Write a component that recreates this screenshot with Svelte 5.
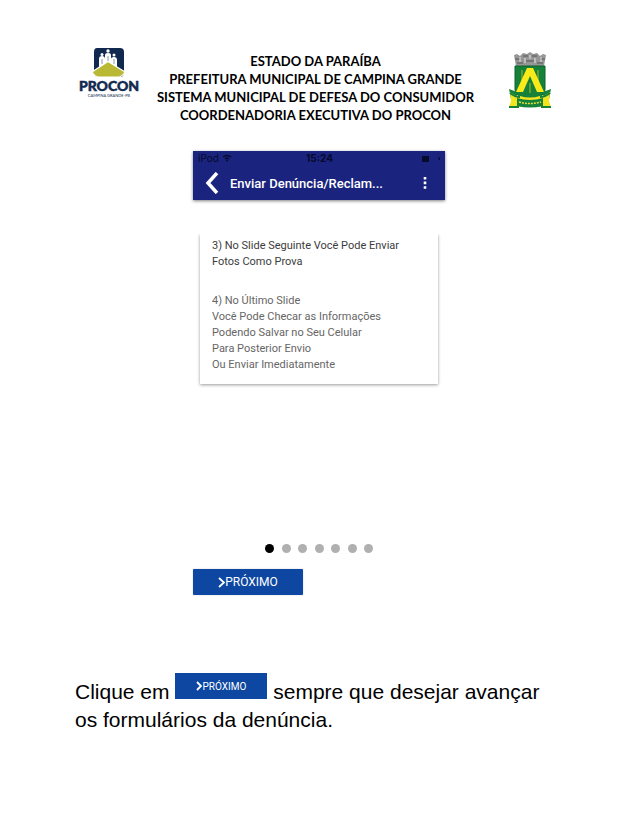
<script>
  const heading = [
    'ESTADO DA PARAÍBA',
    'PREFEITURA MUNICIPAL DE CAMPINA GRANDE',
    'SISTEMA MUNICIPAL DE DEFESA DO CONSUMIDOR',
    'COORDENADORIA EXECUTIVA DO PROCON'
  ];
  const slideCount = 7;
  let active = $state(0);
  const next = () => (active = (active + 1) % slideCount);
</script>

<main class="page">
  <header class="letterhead">
    <svg class="procon" viewBox="0 0 60 52" role="img" aria-label="Procon Campina Grande">
      <path d="M18 1h23q4 0 4 4v20q0 5-4 5H19q-4 0-4-5V5q0-4 3-4z" fill="#12294f" />
      <path d="M20 20v-8q0-3 3-3t3 3V8q0-2 3-2t3 2v4q0-2 3-2t3 3v7l4 4H18z" fill="#fff" />
      <circle cx="23" cy="7.500" r="1.500" fill="#fff" />
      <circle cx="29" cy="4" r="1.700" fill="#fff" />
      <circle cx="35" cy="8" r="1.500" fill="#fff" />
      <path d="M23 12v5M29 9v5M35 12v5" stroke="#8d99ac" stroke-width="1" />
      <path d="M29 14.500L46 25q-3 5-7 5H20q-4 0-7-5z" fill="#b9b936" stroke="#fff" stroke-width="1.200" />
      <text x="30" y="44" text-anchor="middle" class="brand">PROCON</text>
      <text x="30" y="50" text-anchor="middle" class="city">CAMPINA GRANDE-PB</text>
    </svg>
    <h1>
      {#each heading as line}
        <span>{line}</span>
      {/each}
    </h1>
    <svg class="crest" viewBox="0 0 44 58" role="img" aria-label="Brasão de Campina Grande">
      <path d="M6 3l3-1 3 2 3-3 4 1 3-2 3 2 4-1 3 3 3-2 3 1-2 11H8z" fill="#969696" />
      <path d="M7 7h5M15 4h5M24 4h5M32 7h5M9 11h6M18 9h8M29 11h6" stroke="#555" stroke-width="1" />
      <path d="M12 5v5M17 6v5M22 3v4M27 6v5M33 5v5" stroke="#e4e4e4" stroke-width="1" />
      <path d="M7 14h30v24q-2 7-15 14Q9 45 7 38z" fill="#16813b" stroke="#0b6329" stroke-width="1" />
      <path d="M14 18v12M30 18v12M22 31v10" stroke="#659d2c" stroke-width="2" />
      <path d="M19 16h6l11 24h-7l-7-16-7 16H8z" fill="#fbea19" />
      <path d="M1 37l8 3v7H3zM43 37l-8 3v7h6z" fill="#16813b" />
      <path d="M2 40q5 4 10 4 10 3 20 0 5 0 10-4l-1 9 2 6H1l2-6z" fill="#f2e51d" />
      <path d="M2 41q5 4 10 4M42 41q-5 4-10 4M1 55h10M33 55h10" fill="none" stroke="#16813b" stroke-width="2" />
      <path d="M9 46q13 4 26 0v8q-13 3-26 0z" fill="#16813b" />
      <path d="M11 50q11 3 22 0" fill="none" stroke="#dfe33a" stroke-width="1.500" stroke-dasharray="2 1" />
    </svg>
  </header>

  <section class="phone" aria-label="Enviar Denúncia/Reclamação">
    <div class="appbar">
      <div class="status">
        <span class="device">iPod
          <svg width="10" height="8" viewBox="0 0 10 8" aria-hidden="true">
            <path d="M1 3q4-3 8 0M3 5q2-2 4 0" fill="none" stroke="currentColor" stroke-width="1.300" />
            <circle cx="5" cy="6.500" r="1" fill="currentColor" />
          </svg>
        </span>
        <b>15:24</b>
        <span class="battery">
          <svg width="19" height="8" viewBox="0 0 19 8" aria-hidden="true">
            <path d="M0 1h7v6H0zM16 2l2 1v2h-1z" fill="currentColor" />
          </svg>
        </span>
      </div>
      <div class="toolbar">
        <button class="icon" aria-label="Voltar">
          <svg width="14" height="22" viewBox="0 0 14 22"><path d="M12 1L3 11l9 10" fill="none" stroke="#fff" stroke-width="3.500" /></svg>
        </button>
        <h2>Enviar Denúncia/Reclam...</h2>
        <button class="icon" aria-label="Mais opções">
          <svg width="4" height="12" viewBox="0 0 4 12" fill="#fff"><path d="M.7 0h2.600v2.600H.7zM.7 4.600h2.600v2.600H.7zM.7 9.200h2.600v2.600H.7z" /></svg>
        </button>
      </div>
    </div>

    <article class="card">
      <p class="strong">3) No Slide Seguinte Você Pode Enviar<br />Fotos Como Prova</p>
      <p>4) No Último Slide<br />Você Pode Checar as Informações<br />Podendo Salvar no Seu Celular<br />Para Posterior Envio<br />Ou Enviar Imediatamente</p>
    </article>

    <nav class="dots" aria-label="Slides">
      {#each Array(slideCount) as _, i}
        <button class:active={i === active} aria-label={`Slide ${i + 1}`} onclick={() => (active = i)}></button>
      {/each}
    </nav>

    <button class="next" onclick={next}>
      <svg width="7" height="11" viewBox="0 0 7 11" aria-hidden="true"><path d="M1 1l5 4.500L1 10" fill="none" stroke="#fff" stroke-width="1.800" /></svg>PRÓXIMO
    </button>
  </section>

  <p class="instruction">
    Clique em <button class="next small" onclick={next}><svg width="6" height="10" viewBox="0 0 6 10" aria-hidden="true"><path d="M1 1l4 4-4 4" fill="none" stroke="#fff" stroke-width="1.800" /></svg>PRÓXIMO</button> sempre que desejar avançar os formulários da denúncia.
  </p>
</main>

<style>
  :global(body) {
    margin: 0;
    background: #fff;
  }
  .page {
    padding: 47px 75px 88px;
    font-family: 'Liberation Sans', Arial, sans-serif;
    color: #000;
  }
  h1, h2, p {
    margin: 0;
  }
  button {
    border: 0;
    padding: 0;
    cursor: pointer;
  }
  .letterhead {
    display: flex;
    justify-content: space-between;
    align-items: flex-start;
    padding: 0 11px 0 4px;
  }
  .procon {
    width: 60px;
    height: 52px;
    overflow: visible;
  }
  .brand {
    font: 900 14px Lato, sans-serif;
    fill: #12294f;
    stroke: #12294f;
    stroke-width: 0.5px;
  }
  .city {
    font: 4px Lato, sans-serif;
    fill: #12294f;
  }
  .letterhead h1 {
    padding: 5px 16px 0 0;
    font: 700 13px/18px Lato, Calibri, sans-serif;
    text-align: center;
    white-space: nowrap;
  }
  .letterhead h1 span {
    display: block;
  }
  .crest {
    width: 44px;
    height: 58px;
    padding-top: 5px;
  }
  .phone {
    width: 252px;
    margin: 27px auto 0;
    font-family: Roboto, sans-serif;
  }
  .appbar {
    background: #1a237e;
    box-shadow: 0 1px 3px rgba(0, 0, 0, 0.5);
  }
  .status {
    display: grid;
    grid-template-columns: 1fr auto 1fr;
    align-items: center;
    height: 15px;
    padding: 0 4px 0 5px;
    font: 10px/15px Inter, sans-serif;
    color: #060a2c;
  }
  .battery {
    display: flex;
    justify-content: flex-end;
  }
  .toolbar {
    display: flex;
    align-items: center;
    height: 34px;
    padding: 0 18px 0 12px;
  }
  .toolbar h2 {
    flex: 1;
    padding-left: 11px;
    font-size: 13px;
    font-weight: 500;
    color: #fff;
    white-space: nowrap;
  }
  .icon {
    display: flex;
    background: none;
  }
  .card {
    margin: 34px 7px 0;
    padding: 4px 12px 11px;
    font-size: 11px;
    line-height: 16px;
    color: #666;
    box-shadow: 0 1px 3px rgba(0, 0, 0, 0.4);
    clip-path: inset(0 -4px -5px);
  }
  .card .strong {
    margin-bottom: 23px;
    color: #3c3c3c;
  }
  .dots {
    display: flex;
    justify-content: space-between;
    width: 108px;
    margin: 160px auto 0;
  }
  .dots button {
    width: 9px;
    height: 9px;
    border-radius: 50%;
    background: #b0b0b0;
  }
  .dots .active {
    background: #000;
  }
  .next {
    display: flex;
    align-items: center;
    justify-content: center;
    width: 110px;
    height: 26px;
    margin-top: 16px;
    border-radius: 1px;
    background: #0d47a1;
    box-shadow: 0 0 2px rgba(0, 0, 0, 0.2);
    color: #fff;
    font: 12px Roboto, sans-serif;
  }
  .instruction {
    margin-top: 78px;
    font-size: 21px;
    line-height: 28px;
  }
  .small {
    display: inline-flex;
    width: 92px;
    height: 26px;
    margin: 0;
    border-radius: 0;
    font-size: 10px;
    box-shadow: none;
    vertical-align: 8px;
  }
</style>
